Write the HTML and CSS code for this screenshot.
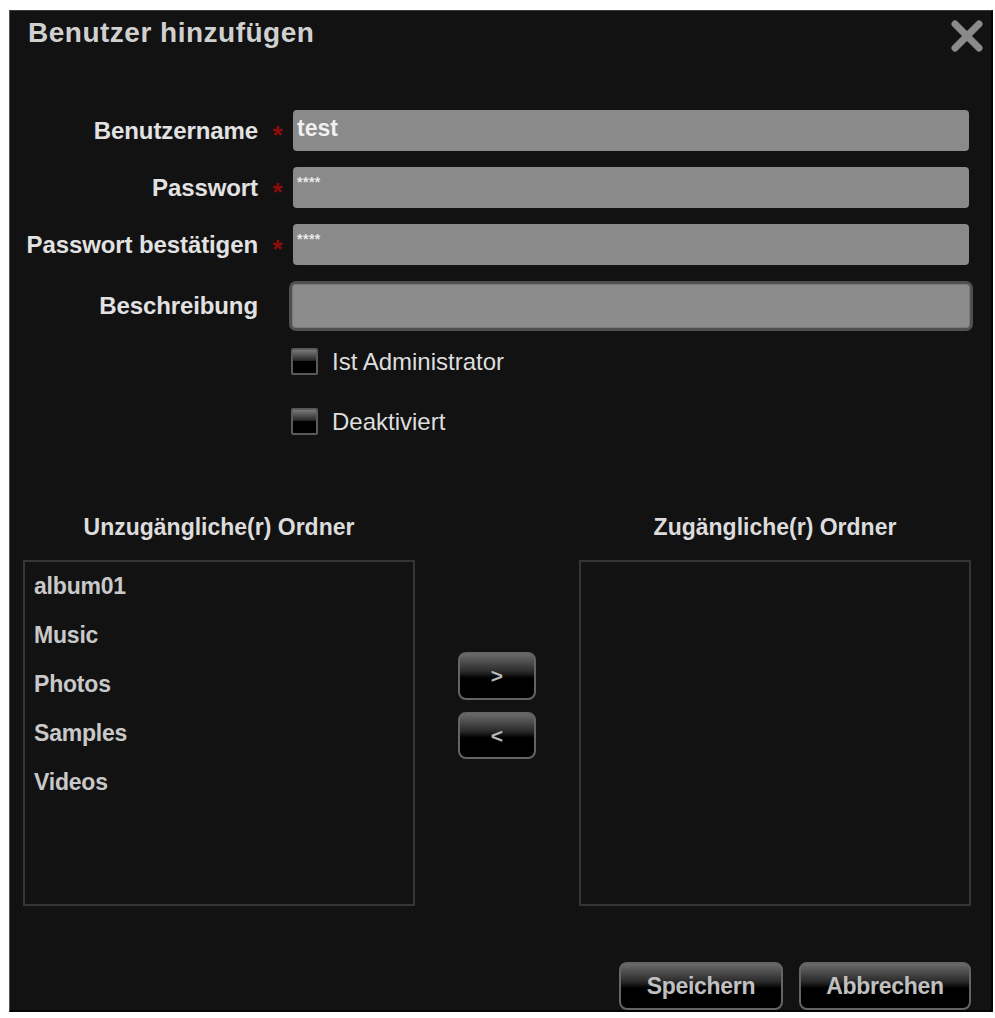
FILE: index.html
```html
<!DOCTYPE html>
<html lang="de">
<head>
<meta charset="utf-8">
<title>Benutzer hinzufügen</title>
<link rel="stylesheet" href="styles.css">
</head>
<body>
<div class="dialog">
  <div class="titlebar">
    <div class="title">Benutzer hinzufügen</div>
    <svg class="close" viewBox="0 0 34 34" width="34" height="34" aria-label="Schließen">
      <path d="M5 5 L29 29 M29 5 L5 29" stroke="#8a8a8a" stroke-width="7" stroke-linecap="round" fill="none"/>
    </svg>
  </div>

  <div class="form">
    <div class="label">Benutzername</div><div class="req">*</div><div class="field">test</div>
    <div class="label">Passwort</div><div class="req">*</div><div class="field pw">****</div>
    <div class="label">Passwort bestätigen</div><div class="req">*</div><div class="field pw">****</div>
    <div class="label">Beschreibung</div><div class="req"></div><div class="field focus"></div>
    <div></div><div></div><label class="check"><span class="box"></span>Ist Administrator</label>
    <div></div><div></div><label class="check"><span class="box"></span>Deaktiviert</label>
  </div>

  <div class="folders">
    <div class="head">Unzugängliche(r) Ordner</div>
    <div></div>
    <div class="head">Zugängliche(r) Ordner</div>
    <ul class="list">
      <li>album01</li>
      <li>Music</li>
      <li>Photos</li>
      <li>Samples</li>
      <li>Videos</li>
    </ul>
    <div class="moves">
      <button class="btn small">&gt;</button>
      <button class="btn small">&lt;</button>
    </div>
    <ul class="list"></ul>
  </div>

  <div class="footer">
    <button class="btn big save">Speichern</button>
    <button class="btn big cancel">Abbrechen</button>
  </div>
</div>
</body>
</html>
```
FILE: styles.css
```css
html, body {
  margin: 0;
  padding: 0;
  background: #ffffff;
}
body {
  font-family: "Liberation Sans", Arial, sans-serif;
  padding: 10px 2px 6px 9px;
}
.dialog {
  box-sizing: border-box;
  width: 984px;
  height: 1002px;
  background: #121212;
  border-top: 1px solid #3a3a3a;
  border-left: 1px solid #555;
  border-right: 2px solid #050505;
  border-bottom: 2px solid #050505;
  display: flex;
  flex-direction: column;
}
.titlebar {
  display: flex;
  justify-content: space-between;
  align-items: flex-start;
  padding: 6px 7px 0 18px;
}
.title {
  font-size: 28px;
  line-height: 32px;
  font-weight: bold;
  color: #d0d0d0;
  letter-spacing: 0.5px;
}
.close {
  margin-top: 2px;
  display: block;
}
.form {
  margin-top: 57px;
  display: grid;
  grid-template-columns: 248px 35px 1fr;
  row-gap: 16px;
  padding-right: 22px;
  align-items: center;
}
.label {
  text-align: right;
  font-size: 24px;
  font-weight: bold;
  color: #e2e2e2;
  letter-spacing: -0.1px;
}
.req {
  color: #8e0c0c;
  font-size: 26px;
  font-weight: bold;
  text-align: center;
  line-height: 1;
  padding-top: 8px;
  padding-left: 4px;
}
.field {
  box-sizing: border-box;
  height: 41px;
  background: #8a8a8a;
  border-radius: 4px;
  color: #f0f0f0;
  font-size: 23px;
  font-weight: bold;
  padding: 6px 4px 0;
  line-height: 24px;
}
.field.pw {
  font-size: 14px;
  line-height: 14px;
  padding-top: 8px;
  letter-spacing: 0.5px;
  color: #e8e8e8;
}
.field.focus {
  height: 50px;
  margin-left: -4px;
  margin-right: -4px;
  border: 3px solid #505050;
  border-radius: 7px;
  background: #8c8c8c;
  box-shadow: inset 0 0 0 1px #7a7a7a;
}
.check {
  display: flex;
  align-items: center;
  gap: 14px;
  font-size: 24px;
  color: #dedede;
  letter-spacing: 0;
  margin-left: -2px;
  height: 27px;
  margin-top: 1px;
}
.check + div, .check + div + div, .check + div + div + label {
  margin-top: 17px;
}
.box {
  box-sizing: border-box;
  width: 27px;
  height: 27px;
  border: 2px solid #5a5a5a;
  border-radius: 2px;
  background: linear-gradient(#7a7a7a 0%, #2a2a2a 45%, #000 50%, #000 100%);
}
.folders {
  margin-top: 79px;
  padding-left: 13px;
  display: grid;
  grid-template-columns: 392px 164px 392px;
  grid-template-rows: auto 346px;
  row-gap: 20px;
}
.head {
  text-align: center;
  font-size: 23px;
  font-weight: bold;
  color: #dcdcdc;
  line-height: 26px;
  letter-spacing: 0;
}
.list {
  list-style: none;
  margin: 0;
  padding: 0 0 0 9px;
  box-sizing: border-box;
  border: 2px solid #353535;
  background: #121212;
}
.list li {
  font-size: 23px;
  font-weight: bold;
  color: #c9c9c9;
  line-height: 49px;
  letter-spacing: -0.2px;
}
.moves {
  display: flex;
  flex-direction: column;
  align-items: center;
  gap: 12px;
  padding-top: 92px;
}
.btn {
  box-sizing: border-box;
  border: 2px solid #646464;
  border-radius: 8px;
  background: linear-gradient(#6a6a6a 0%, #2a2a2a 40%, #000 55%, #000 100%);
  color: #c0c0c0;
  font-family: "Liberation Sans", Arial, sans-serif;
  font-weight: bold;
  padding: 0;
}
.btn.small {
  width: 78px;
  height: 48px;
  font-size: 21px;
  color: #b8b8b8;
}
.moves .btn.small + .btn.small {
  height: 47px;
}
.footer {
  margin-top: auto;
  display: flex;
  justify-content: flex-end;
  gap: 16px;
  padding: 0 20px 0 0;
}
.btn.big {
  height: 48px;
  font-size: 23px;
  letter-spacing: -0.3px;
}
.btn.save { width: 164px; }
.btn.cancel { width: 172px; }
```
